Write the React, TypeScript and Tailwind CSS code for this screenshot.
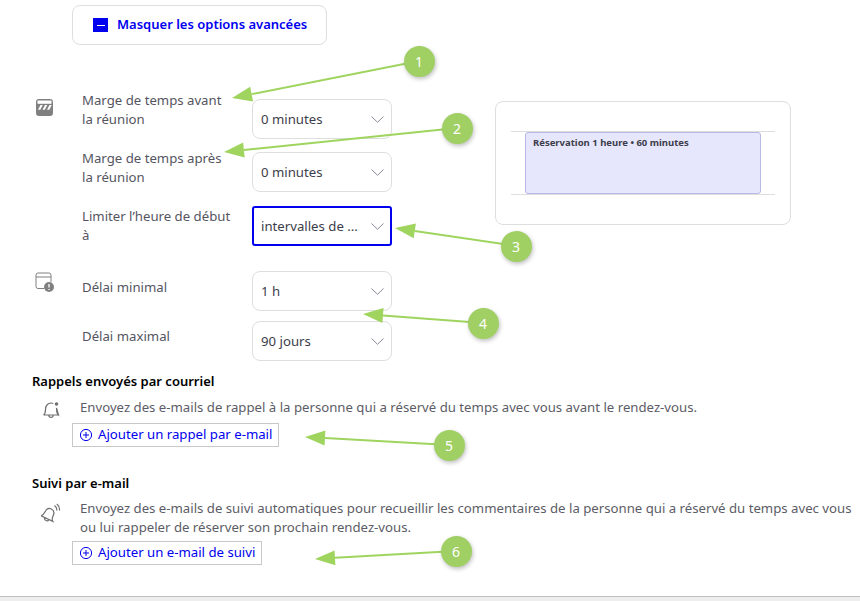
const font = { fontFamily: '"Noto Sans", "Open Sans", sans-serif' };

const arrows = [
  { from: [419, 61], to: [232, 98] },
  { from: [457, 128], to: [224, 152] },
  { from: [516, 246], to: [395, 228] },
  { from: [483, 323], to: [363, 314] },
  { from: [449, 445], to: [305, 437] },
  { from: [456, 551], to: [315, 559] },
];

function Arrow({ from, to }: { from: number[]; to: number[] }) {
  const dx = from[0] - to[0];
  const dy = from[1] - to[1];
  const len = Math.hypot(dx, dy);
  const ux = dx / len;
  const uy = dy / len;
  const bx = to[0] + ux * 20;
  const by = to[1] + uy * 20;
  const head = `${to[0]},${to[1]} ${bx - uy * 7.5},${by + ux * 7.5} ${bx + uy * 7.5},${by - ux * 7.5}`;
  return (
    <g>
      <line x1={from[0]} y1={from[1]} x2={bx} y2={by} stroke="#9fd45f" strokeWidth="2" />
      <polygon points={head} fill="#9fd45f" />
    </g>
  );
}

function Select({ value, focused }: { value: string; focused?: boolean }) {
  return (
    <div
      className={
        focused
          ? 'flex h-10 w-[140px] items-center justify-between rounded-[3px] border-2 border-[#0000ee] pl-[7px] pr-[6px] text-[13.2px] text-[#3d3d4a]'
          : 'flex h-10 w-[140px] items-center justify-between rounded-[8px] border border-[#dedede] pl-2 pr-[7px] text-[13.2px] text-[#3d3d4a]'
      }
    >
      <span className="pt-px">{value}</span>
      <svg width="13" height="7" viewBox="0 0 13 7" fill="none" stroke="#8a8a98" strokeWidth="1">
        <path d="M0.500 0.500 6.500 6.300 12.500 0.500" />
      </svg>
    </div>
  );
}

function AddButton({ label }: { label: string }) {
  return (
    <button className="ml-10 flex h-6 items-center gap-[5px] border border-[#c8c8c8] px-[6px] text-[13.2px] text-[#0000ee]">
      <svg width="14" height="14" viewBox="0 0 14 14" fill="none" stroke="#0000ee" strokeWidth="1">
        <circle cx="7" cy="7" r="5.6" />
        <path d="M7 4v6M4 7h6" />
      </svg>
      <span>{label}</span>
    </button>
  );
}

function App() {
  return (
    <div className="relative h-[601px] w-[860px] overflow-hidden bg-white" style={font}>
      <div className="pl-[72px] pt-[5px]">
        <button className="flex h-10 w-[255px] items-center gap-[9px] rounded-[8px] border border-[#dedede] pl-5 text-[13px] font-semibold text-[#0000ee]">
          <span className="flex h-[14px] w-[15px] items-center justify-center bg-[#0000ee]">
            <span className="h-px w-2 bg-white" />
          </span>
          Masquer les options avancées
        </button>
      </div>

      <div className="mt-[54px] flex">
        <div className="w-[495px] shrink-0">
          <div className="flex h-[167px]">
            <div className="w-[82px] pl-[36px]">
              <svg width="17" height="17" viewBox="0 0 17 17">
                <rect x="0.500" y="0.500" width="16" height="16" rx="2" fill="#808080" stroke="#808080" />
                <rect x="1.500" y="1.500" width="14" height="3.300" fill="#fff" />
                <path d="M2 10.700 4.500 6H6.800L4.300 10.700zM6.500 10.700 9 6H11.300L8.800 10.700zM11 10.700 13.500 6H15.500V6.500L13.300 10.700z" fill="#fff" />
              </svg>
            </div>
            <div className="flex flex-col">
              <div className="flex h-[53px]">
                <p className="-mt-[8px] w-[170px] pr-6 text-[13.2px] leading-[19px] text-[#55555f]">
                  Marge de temps avant la réunion
                </p>
                <Select value="0 minutes" />
              </div>
              <div className="flex h-[54px]">
                <p className="-mt-[3px] w-[170px] pr-6 text-[13.2px] leading-[19px] text-[#55555f]">
                  Marge de temps après la réunion
                </p>
                <Select value="0 minutes" />
              </div>
              <div className="flex">
                <p className="w-[170px] pr-[18px] pt-px text-[13.2px] leading-[19px] text-[#55555f]">
                  Limiter l’heure de début à
                </p>
                <Select value="intervalles de ..." focused />
              </div>
            </div>
          </div>

          <div className="mt-[5px] flex">
            <div className="w-[82px] pl-[35px] pt-px">
              <svg width="20" height="20" viewBox="0 0 20 20" fill="none">
                <path d="M9 16.500H3a2 2 0 0 1-2-2V3a2 2 0 0 1 2-2h11a2 2 0 0 1 2 2v7" stroke="#808080" />
                <path d="M1 5h15" stroke="#808080" />
                <circle cx="14" cy="15" r="5" fill="#808080" />
                <path d="M14 12v3.500M14 17v1" stroke="#fff" strokeWidth="1.300" />
              </svg>
            </div>
            <div className="flex flex-col gap-[10px]">
              <div className="flex">
                <p className="w-[170px] pt-[7px] text-[13.2px] leading-[19px] text-[#55555f]">Délai minimal</p>
                <Select value="1 h" />
              </div>
              <div className="flex">
                <p className="w-[170px] pt-[6px] text-[13.2px] leading-[19px] text-[#55555f]">Délai maximal</p>
                <Select value="90 jours" />
              </div>
            </div>
          </div>
        </div>

        <div className="mt-[2px] flex h-[124px] w-[296px] flex-col justify-center self-start rounded-[8px] border border-[#dedede] px-[15px]">
          <div className="border-y border-[#dedede] px-[14px]">
            <div className="h-[62px] rounded-[3px] border border-[#b9b9e6] bg-[#e6e6fc] px-[7px] py-[3px] text-[9.500px] font-bold leading-[14px] text-[#3d3d4a]">
              Réservation 1 heure • 60 minutes
            </div>
          </div>
        </div>
      </div>

      <div className="mt-[11px] pl-8 text-[#5c5c66]">
        <h3 className="text-[13px] font-semibold leading-[18px] text-black">Rappels envoyés par courriel</h3>
        <div className="mt-[8px] flex">
          <svg width="18" height="18" viewBox="0 0 18 18" fill="none" stroke="#6f6f6f" strokeWidth="1.200" className="ml-[10px] mt-[3px] shrink-0">
            <path d="M1.500 14c1.500-1 2-2.500 2-5.500C3.500 4.500 6 2 9 2c.8 0 1.500.2 2.200.5M14.500 7c0 4 .5 6 2 7zM1.500 14h15M6.800 14.200c0 2.800 4.400 2.800 4.400 0" />
            <circle cx="14.500" cy="3" r="1.800" fill="#6f6f6f" stroke="none" />
          </svg>
          <p className="ml-[20px] text-[13.2px] leading-[19px]">
            Envoyez des e-mails de rappel à la personne qui a réservé du temps avec vous avant le rendez-vous.
          </p>
        </div>
        <div className="mt-[4px]">
          <AddButton label="Ajouter un rappel par e-mail" />
        </div>

        <h3 className="mt-[27px] text-[13px] font-semibold leading-[18px] text-black">Suivi par e-mail</h3>
        <div className="mt-[7px] flex">
          <svg width="20" height="20" viewBox="0 0 20 20" fill="none" stroke="#6f6f6f" strokeWidth="1.200" className="ml-[9px] mt-[4px] shrink-0">
            <g transform="rotate(25 8 11)">
              <path d="M1.500 16c1.500-1 2-2.500 2-5C3.500 7.500 5.500 5.500 8 5.500s4.500 2 4.500 5.500c0 2.500.5 4 2 5zM5.800 16.200c0 2.600 4.400 2.600 4.400 0" />
            </g>
            <path d="M13.500 2.500c1.500 1 2.500 2.800 2.300 5M15.800 1c2 1.500 3 3.800 2.700 6.500" />
          </svg>
          <p className="ml-[19px] w-[775px] text-[13.2px] leading-[19px]">
            Envoyez des e-mails de suivi automatiques pour recueillir les commentaires de la personne qui a réservé du temps avec vous ou lui rappeler de réserver son prochain rendez-vous.
          </p>
        </div>
        <div className="mt-[4px]">
          <AddButton label="Ajouter un e-mail de suivi" />
        </div>
      </div>

      <div className="absolute bottom-0 left-0 h-[5px] w-full border-t border-[#c0c0c0] bg-[#eeeeee]" />

      <svg width="860" height="601" className="pointer-events-none absolute left-0 top-0">
        {arrows.map((a, i) => (
          <Arrow key={i} from={a.from} to={a.to} />
        ))}
      </svg>
      {arrows.map((a, i) => (
        <div
          key={i}
          className="absolute flex h-[31px] w-[31px] items-center justify-center rounded-full bg-[#a0cf64] text-[14px] text-white shadow-[1px_2px_4px_rgba(0,0,0,0.25)]"
          style={{ left: a.from[0] - 15.5, top: a.from[1] - 15.5 }}
        >
          {i + 1}
        </div>
      ))}
    </div>
  );
}

export default App;
